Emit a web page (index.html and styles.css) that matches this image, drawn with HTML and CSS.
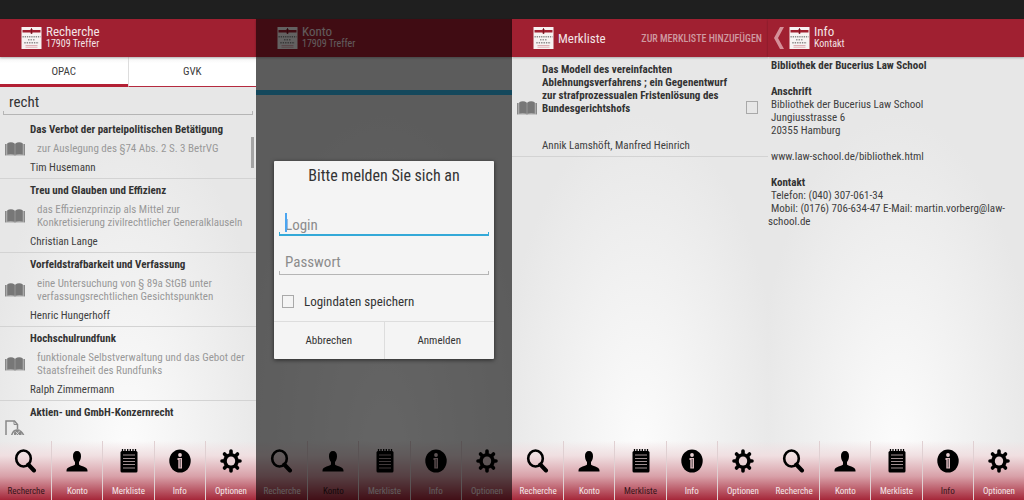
FILE: index.html
```
<!DOCTYPE html>
<html lang="de">
<head>
<meta charset="utf-8">
<title>Bucerius Law School Bibliothek</title>
<link rel="stylesheet" href="styles.css">
</head>
<body>
<svg class="defs" aria-hidden="true">
  <symbol id="logo" viewBox="0 0 20 22">
    <rect width="20" height="22" fill="#f7f2f2"/>
    <path d="M1 3h8v-1h2v1h8v2.500h-8v1h-2v-1h-8z" fill="#a01f30"/>
    <path d="M10 1v6" stroke="#6b1420" stroke-width="0.800"/>
    <path d="M1 9.700h18" stroke="#888" stroke-width="1.600" stroke-dasharray="1.300 0.900"/>
    <path d="M6.500 12.700h7" stroke="#999" stroke-width="1.600" stroke-dasharray="1.500 1"/>
    <path d="M2.800 15.700h14.500" stroke="#888" stroke-width="1.600" stroke-dasharray="1.400 1"/>
    <path d="M4 18.500h12M4 20.200h12" stroke="#d9a5ab" stroke-width="0.900"/>
  </symbol>
  <symbol id="book" viewBox="0 0 20 14">
    <path d="M0.300 2H19.700V13.500H11.300L10 14L8.700 13.500H0.300z" fill="#aaa"/>
    <path d="M2.300 1.200C4.500 0 7.500 0 9.700 1.400V12.800C7.500 11.800 4.500 11.800 2.300 12.500z" fill="#777"/>
    <path d="M17.700 1.200C15.500 0 12.500 0 10.300 1.400V12.800C12.500 11.800 15.500 11.800 17.700 12.500z" fill="#777"/>
    <path d="M0.500 2V13.300M19.500 2V13.300" fill="none" stroke="#888" stroke-width="1"/>
  </symbol>
  <symbol id="doc" viewBox="0 0 20 20">
    <path d="M1 19V1H9.500L12.500 4.500V9" fill="none" stroke="#888" stroke-width="1.500"/>
    <path d="M9 1V4.500H12.500" fill="none" stroke="#888" stroke-width="1"/>
    <path d="M6.500 16C8 8.500 15 7.500 18.800 15.500" fill="none" stroke="#888" stroke-width="1.500"/>
    <circle cx="12.800" cy="13.500" r="3.800" fill="#888"/>
    <path d="M10.500 11.500L15 16M15 10.500L10.500 15.500" stroke="#eee" stroke-width="0.700"/>
  </symbol>
  <symbol id="search" viewBox="0 0 24 24">
    <ellipse cx="9.500" cy="9.500" rx="7.300" ry="8" fill="none" stroke="#000" stroke-width="2.600"/>
    <path d="M14.300 15.500L20 21.500" stroke="#000" stroke-width="4" stroke-linecap="round"/>
  </symbol>
  <symbol id="person" viewBox="0 0 24 24">
    <path d="M12 2C9.400 2 7.900 4 8 7.200C8.100 10 9 11.500 10 13V15.500C9.500 17.300 1.500 17.300 1.500 21.500V22.500H22.500V21.500C22.500 17.300 14.500 17.300 14 15.500V13C15 11.500 15.900 10 16 7.200C16.100 4 14.600 2 12 2z"/>
  </symbol>
  <symbol id="list" viewBox="0 0 24 24">
    <path d="M5 2H19Q20.500 2 20.500 3.500V22Q20.500 23.500 19 23.500H5Q3.500 23.500 3.500 22V3.500Q3.500 2 5 2z"/>
    <path d="M5.500 0V3M8 0V3M10.700 0V3M13.300 0V3M16 0V3M18.500 0V3" stroke="#000" stroke-width="1.300"/>
    <path d="M6 6H18M6 9.500H18M6 12.500H18M6 15.500H18M6 19H18" stroke="#a08f91" stroke-width="1"/>
  </symbol>
  <symbol id="info" viewBox="0 0 24 24">
    <ellipse cx="12" cy="12" rx="10.700" ry="11.500"/>
    <circle cx="12" cy="6" r="1.900" fill="#e8cfd2"/>
    <path d="M9.500 9H14V19.500H10.300V11H9.500z" fill="#dcb9be"/>
    <path d="M12.200 10V18.500" stroke="#333" stroke-width="0.800"/>
  </symbol>
  <symbol id="gear" viewBox="0 0 24 24">
    <path d="M12 2V22M3 12H21M5.500 5L18.500 19M18.500 5L5.500 19" stroke="#000" stroke-width="3.600" stroke-linecap="round"/>
    <circle cx="12" cy="12" r="7.800"/>
    <ellipse cx="12" cy="12" rx="4.200" ry="4.600" fill="#e9d2d5"/>
  </symbol>
</svg>

<div class="system-bar"></div>
<main class="screens">
  <section class="screen">
    <header class="bar">
      <svg class="logo"><use href="#logo"/></svg>
      <div class="heading"><h1>Recherche</h1><p>17909 Treffer</p></div>
    </header>
    <div class="tabs">
      <button class="tab selected" type="button">OPAC</button>
      <button class="tab" type="button">GVK</button>
    </div>
    <div class="search"><input class="field" type="text" aria-label="Suche" value="recht"></div>
    <div class="results">
      <article class="item"><svg class="book"><use href="#book"/></svg><div class="text"><h2>Das Verbot der parteipolitischen Betätigung</h2><p class="sub">zur Auslegung des §74 Abs. 2 S. 3 BetrVG</p><p>Tim Husemann</p></div></article>
      <article class="item"><svg class="book"><use href="#book"/></svg><div class="text"><h2>Treu und Glauben und Effizienz</h2><p class="sub">das Effizienzprinzip als Mittel zur<br>Konkretisierung zivilrechtlicher Generalklauseln</p><p>Christian Lange</p></div></article>
      <article class="item"><svg class="book"><use href="#book"/></svg><div class="text"><h2>Vorfeldstrafbarkeit und Verfassung</h2><p class="sub">eine Untersuchung von § 89a StGB unter<br>verfassungsrechtlichen Gesichtspunkten</p><p>Henric Hungerhoff</p></div></article>
      <article class="item"><svg class="book"><use href="#book"/></svg><div class="text"><h2>Hochschulrundfunk</h2><p class="sub">funktionale Selbstverwaltung und das Gebot der<br>Staatsfreiheit des Rundfunks</p><p>Ralph Zimmermann</p></div></article>
      <article class="item cut"><svg class="doc"><use href="#doc"/></svg><div class="text"><h2>Aktien- und GmbH-Konzernrecht</h2></div></article>
      <span class="scrollbar"></span>
    </div>
    <nav class="nav">
      <a class="current" href="#recherche"><svg><use href="#search"/></svg>Recherche</a>
      <a href="#konto"><svg><use href="#person"/></svg>Konto</a>
      <a href="#merkliste"><svg><use href="#list"/></svg>Merkliste</a>
      <a href="#info"><svg><use href="#info"/></svg>Info</a>
      <a href="#optionen"><svg><use href="#gear"/></svg>Optionen</a>
    </nav>
  </section>

  <section class="screen">
    <header class="bar">
      <svg class="logo"><use href="#logo"/></svg>
      <div class="heading"><h1>Konto</h1><p>17909 Treffer</p></div>
    </header>
    <div class="content account"><div class="stripe"></div></div>
    <nav class="nav">
      <a href="#recherche"><svg><use href="#search"/></svg>Recherche</a>
      <a class="current" href="#konto"><svg><use href="#person"/></svg>Konto</a>
      <a href="#merkliste"><svg><use href="#list"/></svg>Merkliste</a>
      <a href="#info"><svg><use href="#info"/></svg>Info</a>
      <a href="#optionen"><svg><use href="#gear"/></svg>Optionen</a>
    </nav>
    <div class="overlay">
      <form class="dialog">
        <h2>Bitte melden Sie sich an</h2>
        <div class="entry active"><input class="field" type="text" aria-label="Login" placeholder="Login"><span class="caret"></span></div>
        <div class="entry"><input class="field" type="password" aria-label="Passwort" placeholder="Passwort"></div>
        <label class="remember"><input class="check" type="checkbox">Logindaten speichern</label>
        <div class="actions"><button type="button">Abbrechen</button><button type="button">Anmelden</button></div>
      </form>
    </div>
  </section>

  <section class="screen">
    <header class="bar">
      <svg class="logo"><use href="#logo"/></svg>
      <div class="heading"><h1>Merkliste</h1></div>
      <button class="add" type="button">ZUR MERKLISTE HINZUFÜGEN</button>
    </header>
    <div class="content">
      <article class="item saved"><svg class="book"><use href="#book"/></svg><div class="text"><h2>Das Modell des vereinfachten<br>Ablehnungsverfahrens ; ein Gegenentwurf<br>zur strafprozessualen Fristenlösung des<br>Bundesgerichtshofs</h2><p>Annik Lamshöft, Manfred Heinrich</p></div><input class="check" type="checkbox" aria-label="Titel auswählen"></article>
    </div>
    <nav class="nav">
      <a href="#recherche"><svg><use href="#search"/></svg>Recherche</a>
      <a href="#konto"><svg><use href="#person"/></svg>Konto</a>
      <a class="current" href="#merkliste"><svg><use href="#list"/></svg>Merkliste</a>
      <a href="#info"><svg><use href="#info"/></svg>Info</a>
      <a href="#optionen"><svg><use href="#gear"/></svg>Optionen</a>
    </nav>
  </section>

  <section class="screen">
    <header class="bar">
      <a class="back" href="#info" aria-label="Zurück"><svg viewBox="0 0 10 22"><path d="M6 0H10L4 11L10 22H6L0 11z" fill="#d58f98"/></svg></a>
      <svg class="logo"><use href="#logo"/></svg>
      <div class="heading"><h1>Info</h1><p>Kontakt</p></div>
    </header>
    <div class="content contact">
      <h2>Bibliothek der Bucerius Law School</h2>
      <h2>Anschrift</h2>
      <p>Bibliothek der Bucerius Law School<br>Jungiusstrasse 6<br>20355 Hamburg</p>
      <p class="web">www.law-school.de/bibliothek.html</p>
      <h2>Kontakt</h2>
      <p>Telefon: (040) 307-061-34</p>
      <p class="mail">Mobil: (0176) 706-634-47 E-Mail: martin.vorberg@law-<br>school.de</p>
    </div>
    <nav class="nav">
      <a href="#recherche"><svg><use href="#search"/></svg>Recherche</a>
      <a href="#konto"><svg><use href="#person"/></svg>Konto</a>
      <a href="#merkliste"><svg><use href="#list"/></svg>Merkliste</a>
      <a class="current" href="#info"><svg><use href="#info"/></svg>Info</a>
      <a href="#optionen"><svg><use href="#gear"/></svg>Optionen</a>
    </nav>
  </section>
</main>
</body>
</html>
```
FILE: styles.css
```
* { box-sizing: border-box; }
body {
  margin: 0;
  height: 100vh;
  display: flex;
  flex-direction: column;
  background: #1f1f1f;
  color: #404040;
  font: 11px/13px "Roboto Condensed", Roboto, sans-serif;
}
h1, h2, p { margin: 0; font: inherit; }
button, input { font: inherit; color: inherit; }
button { padding: 0; border: 0; background: none; }
a { color: inherit; text-decoration: none; }
.defs { position: absolute; width: 0; height: 0; }
.system-bar { flex: none; height: 19px; }
.screens { flex: 1; min-height: 0; display: grid; grid-template-columns: repeat(4, minmax(0, 1fr)); }
.screen {
  position: relative;
  min-height: 0;
  display: flex;
  flex-direction: column;
  background: radial-gradient(ellipse 56% 70% at 50% 90%, #fcfcfc, #e7e7e7);
}

.bar {
  flex: none;
  position: relative;
  height: 38px;
  padding: 0 6px 0 21px;
  display: flex;
  align-items: center;
  gap: 4px;
  background: #a02031;
  color: #f3e3e5;
  box-shadow: 0 1px 2px #0004;
}
.logo { flex: none; width: 21px; height: 22px; }
.heading { flex: 1; white-space: nowrap; }
.heading h1 { font-size: 13px; }
.heading p { padding-bottom: 2px; font-size: 10px; line-height: 12px; }
.add { color: #cf9aa1; font-size: 10px; font-weight: 500; white-space: nowrap; }
.back { position: absolute; left: 6px; top: 8px; width: 10px; height: 22px; }
.back svg { display: block; width: 10px; height: 22px; }

.tabs { flex: none; height: 30px; display: flex; background: linear-gradient(#f1f1f1, #fff 6px); }
.tab { flex: 1; border-bottom: 1px solid #b52a3f; }
.tab + .tab { border-left: 1px solid #ddd; }
.tab.selected { border-bottom-width: 3px; padding-top: 2px; border-color: #b32034; }

.search { flex: none; height: 31px; padding: 4px 3px 3px; }
.field {
  display: block;
  width: 100%;
  height: 24px;
  padding: 0 6px;
  border: 0;
  outline: 0;
  font-size: 15px;
  color: #333;
  background:
    linear-gradient(#b5b5b5, #b5b5b5) left bottom / 1px 4px no-repeat,
    linear-gradient(#b5b5b5, #b5b5b5) right bottom / 1px 4px no-repeat,
    linear-gradient(#b5b5b5, #b5b5b5) left bottom / 100% 1px no-repeat;
}
.search .field { padding-bottom: 2px; }
.field::placeholder { color: #8c8c8c; opacity: 1; }

.results { position: relative; flex: 1; min-height: 0; overflow: hidden; margin-bottom: 6px; }
.item {
  display: flex;
  align-items: center;
  gap: 5px;
  padding: 5px 4px 4px 5px;
  border-bottom: 1px solid #d3d3d3;
  white-space: nowrap;
}
.book { flex: none; width: 20px; height: 14px; }
.doc { flex: none; width: 20px; height: 20px; margin-top: 14px; }
.text { flex: 1; min-width: 0; }
.item h2, .contact h2 { font-weight: 700; color: #333; }
.sub { margin: 6px 0; padding-left: 7px; color: #999; }
.cut { align-items: flex-start; border: 0; }
.scrollbar { position: absolute; right: 2px; top: 19px; width: 3px; height: 31px; background: #a4a4a4; }

.content { flex: 1; min-height: 0; }
.account { padding-top: 33px; }
.stripe { height: 5px; background: #33b5e5; }
.saved { padding: 6px 10px 4px 5px; }
.saved p { margin-top: 24px; }
.check {
  appearance: none;
  flex: none;
  width: 12px;
  height: 13px;
  margin: 0;
  border: 1px solid #a9a9a9;
}
.contact { padding: 2px 0 0 3px; white-space: nowrap; }
.contact h2 + h2, .web, .web + h2 { margin-top: 13px; }
.mail { margin-left: -3px; text-indent: 3px; }

.nav {
  flex: none;
  height: 59px;
  display: flex;
  background: linear-gradient(#fff0, #f0dfe1 25%, #d8a0a8 60%, #a52739);
  color: #f6e8ea;
  font-size: 9px;
}
.nav a {
  flex: 1 1 0;
  min-width: 0;
  display: flex;
  flex-direction: column;
  align-items: center;
  gap: 12px;
  padding-top: 8px;
  line-height: 12px;
  border-left: 1px solid #e0d0d2;
}
.nav a:first-child { border-color: transparent; }
.nav svg { width: 24px; height: 24px; }
.nav .current { color: #35151a; }

.overlay {
  position: absolute;
  inset: 0;
  padding: 0 18px;
  display: flex;
  align-items: center;
  background: #0009;
}
.dialog { width: 100%; background: #f4f4f4; border-radius: 1px; box-shadow: 0 1px 4px #0009; color: #333; }
.dialog h2 { padding: 5px 0 30px; font-size: 16px; line-height: 20px; text-align: center; }
.entry { position: relative; padding: 0 5px; margin-bottom: 12px; }
.entry .field { height: 26px; background-color: transparent; }
.entry.active .field {
  height: 20px;
  margin-bottom: 13px;
  padding-bottom: 2px;
  background:
    linear-gradient(#33a9d8, #33a9d8) left bottom / 1px 4px no-repeat,
    linear-gradient(#33a9d8, #33a9d8) right bottom / 1px 4px no-repeat,
    linear-gradient(#33a9d8, #33a9d8) left bottom / 100% 2px no-repeat;
}
.entry.active { margin-bottom: 0; }
.caret { position: absolute; left: 11px; top: -3px; width: 2px; height: 19px; background: #4aa5f0; }
.remember { display: flex; align-items: center; gap: 10px; height: 30px; padding-left: 8px; font-size: 13px; }
.actions { display: flex; height: 38px; margin-top: 4px; border-top: 1px solid #ddd; }
.actions button { flex: 1; }
.actions button + button { border-left: 1px solid #ddd; }
```
